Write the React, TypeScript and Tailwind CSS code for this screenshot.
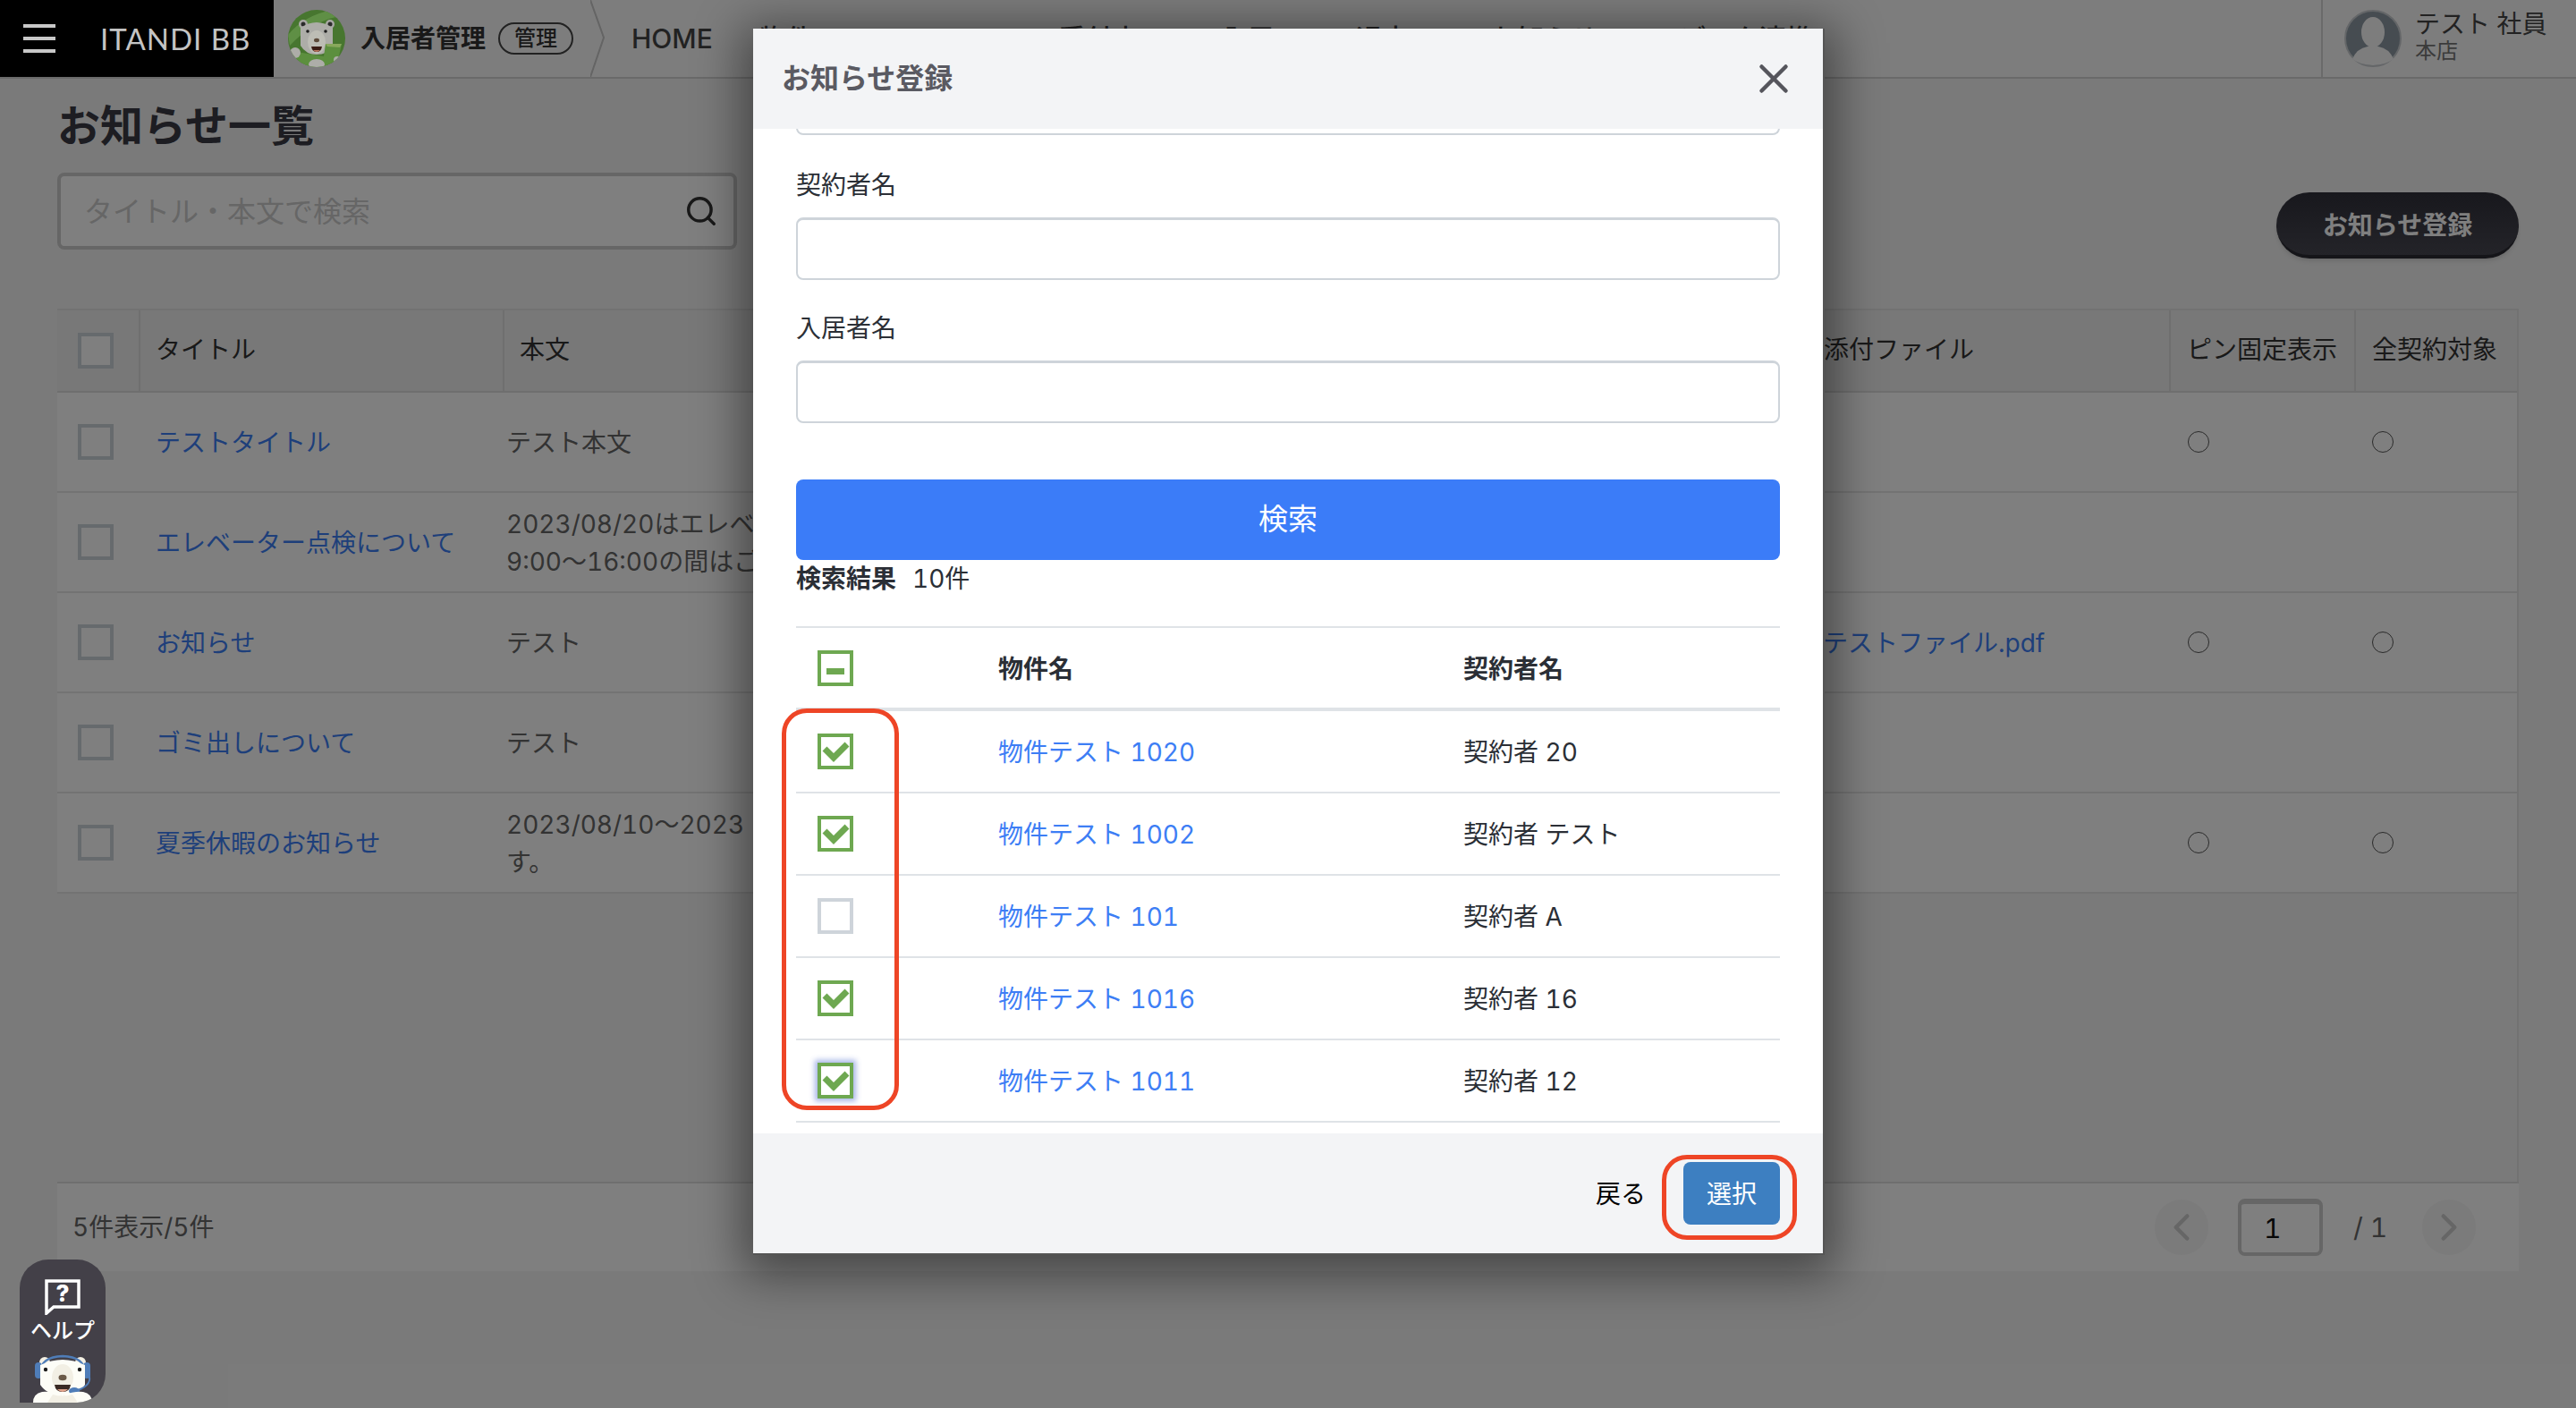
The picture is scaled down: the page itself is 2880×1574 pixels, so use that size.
import React from 'react';
import { Search, X, ChevronLeft, ChevronRight } from 'lucide-react';

const navItems = ['物件', 'ROOM', '受付中', '入居', '退去', 'お知らせ'];

const notices = [
    { title: 'テストタイトル', body: ['テスト本文'], file: '', marks: true },
    { title: 'エレベーター点検について', body: ['2023/08/20はエレベ', '9:00〜16:00の間はご'], file: '', marks: false },
    { title: 'お知らせ', body: ['テスト'], file: 'テストファイル.pdf', marks: true },
    { title: 'ゴミ出しについて', body: ['テスト'], file: '', marks: false },
    { title: '夏季休暇のお知らせ', body: ['2023/08/10〜2023', 'す。'], file: '', marks: true },
];

const results = [
    { name: '物件テスト 1020', owner: '契約者 20', checked: true, focus: false },
    { name: '物件テスト 1002', owner: '契約者 テスト', checked: true, focus: false },
    { name: '物件テスト 101', owner: '契約者 A', checked: false, focus: false },
    { name: '物件テスト 1016', owner: '契約者 16', checked: true, focus: false },
    { name: '物件テスト 1011', owner: '契約者 12', checked: true, focus: true },
];

const tableCols = 'grid grid-cols-[93px_407px_1455px_408px_207px_182px]';

const PageCheckbox = () => <span className="block w-10 h-10 border-4 border-[#cdd4da] bg-white" />;

const Radio = () => <span className="block w-6 h-6 rounded-full border-[1.5px] border-[#555]" />;

const GreenCheckbox = ({ checked, focus }: { checked: boolean; focus: boolean }) => (
    <span className={`block w-10 h-10 border-4 ${checked ? 'border-[#6ea851]' : 'border-[#ced4da]'} ${focus ? 'shadow-[0_0_6px_3px_rgba(60,90,200,0.45)]' : ''}`}>
        {checked && (
            <svg viewBox="0 0 32 32" className="w-8 h-8 overflow-visible">
                <path d="M4 13 L14 23 L29 8" fill="none" stroke="#6ea851" strokeWidth="7" />
            </svg>
        )}
    </span>
);

const TopBear = () => (
    <svg viewBox="0 0 64 64" className="relative z-30 w-16 h-16 shrink-0">
        <defs>
            <clipPath id="top-bear-clip"><circle cx="32" cy="32" r="32" /></clipPath>
        </defs>
        <g clipPath="url(#top-bear-clip)">
            <rect width="64" height="64" fill="#47762f" />
            <path d="M0 28 Q18 6 50 0 L64 0 L64 6 Q30 10 2 40 Z" fill="#5f8f45" />
            <circle cx="17" cy="16" r="5" fill="#a8a8a3" />
            <circle cx="47" cy="16" r="5" fill="#a8a8a3" />
            <circle cx="17" cy="16" r="2.5" fill="#2a2a2a" />
            <circle cx="47" cy="16" r="2.5" fill="#2a2a2a" />
            <path d="M14 20 Q32 8 50 20 L50 40 Q44 50 32 50 Q20 50 14 40 Z" fill="#adada8" />
            <ellipse cx="32" cy="36" rx="10" ry="13" fill="#bdbdb5" />
            <circle cx="22" cy="24" r="1.8" fill="#1c1c1c" />
            <circle cx="42" cy="24" r="1.8" fill="#1c1c1c" />
            <ellipse cx="32" cy="34" rx="3" ry="2.2" fill="#5c4a3a" />
            <path d="M26 41 H38 Q37 47 32 47 Q27 47 26 41 Z" fill="#3a1c14" />
            <path d="M28 45 H36 Q34 47 32 47 Q30 47 28 45 Z" fill="#b8735c" />
            <path d="M4 46 L40 52 L42 38 L60 38 L56 56 L32 70 L8 62 Z" fill="#5c8f3e" />
            <path d="M42 38 L60 38 L58 42 L44 41 Z" fill="#88a85c" />
            <circle cx="8" cy="48" r="6" fill="#adada8" />
            <ellipse cx="32" cy="61" rx="9" ry="6" fill="#adada8" />
            <circle cx="55" cy="56" r="4" fill="#adada8" />
        </g>
    </svg>
);

const HelpBear = () => (
    <svg viewBox="0 0 66 56" className="w-[66px] h-14">
        <circle cx="13" cy="11" r="6" fill="#f4f0e4" />
        <circle cx="53" cy="11" r="6" fill="#f4f0e4" />
        <path d="M9 22 Q8 5 33 4 Q58 5 57 22" fill="none" stroke="#4f7db8" strokeWidth="2.5" />
        <rect x="2" y="11" width="8" height="18" rx="4" fill="#4f7db8" />
        <rect x="56" y="11" width="8" height="18" rx="4" fill="#4f7db8" />
        <path d="M8 14 Q33 2 58 14 L58 36 Q50 48 33 48 Q16 48 8 36 Z" fill="#fdfdf7" />
        <ellipse cx="33" cy="28" rx="12" ry="15" fill="#f2efe4" />
        <circle cx="14" cy="19" r="2.2" fill="#1c1c1c" />
        <circle cx="52" cy="19" r="2.2" fill="#1c1c1c" />
        <ellipse cx="33" cy="28" rx="4.5" ry="3.2" fill="#6b5a48" />
        <path d="M24 36 H42 Q41 44 33 44 Q25 44 24 36 Z" fill="#3a2a24" />
        <path d="M27 41 H39 Q36 44 33 44 Q30 44 27 41 Z" fill="#e2a48c" />
        <path d="M62 24 Q67 36 50 42" fill="none" stroke="#4f7db8" strokeWidth="2" />
        <ellipse cx="46" cy="43" rx="6" ry="4" fill="#4f7db8" />
        <path d="M0 56 Q0 46 10 44 Q20 43 33 48 Q46 43 56 44 Q66 46 66 56 Z" fill="#fdfdf7" />
        <path d="M16 56 L22 47 Q33 50 44 47 L50 56 Z" fill="#f2efe4" />
    </svg>
);

const Page = () => (
    <div className="flex flex-col h-[1574px] bg-[#f5f5f5]">
        <header className="flex h-[88px] shrink-0 bg-[#fbfbfb] border-b-2 border-[#d4d4d4]">
            <div className="relative z-30 flex items-center w-[306px] bg-black pl-[26px]">
                <div className="flex flex-col gap-[10px] w-9">
                    <span className="block h-1 bg-[#c8c8c8]" />
                    <span className="block h-1 bg-[#c8c8c8]" />
                    <span className="block h-1 bg-[#c8c8c8]" />
                </div>
                <span className="ml-[50px] text-[33px] leading-none tracking-[1px] text-[#c4c4c4] font-['Lato',sans-serif]">ITANDI BB</span>
            </div>
            <div className="flex items-center w-[354px] pl-4">
                <TopBear />
                <span className="ml-[17px] text-[28px] font-bold text-[#333]">入居者管理</span>
                <span className="ml-[14px] flex items-center justify-center w-[84px] h-9 rounded-full border-2 border-[#444] text-[24px] leading-none font-medium text-[#333]">管理</span>
            </div>
            <svg viewBox="0 0 16 86" className="w-4 h-[86px] shrink-0">
                <path d="M0 0 L15 42 L0 86" fill="none" stroke="#c8c8c8" strokeWidth="2" />
            </svg>
            <nav className="flex items-center ml-[30px] gap-[52px] text-[30px] font-medium text-[#444]">
                <span>HOME</span>
                {navItems.map((item) => (
                    <span key={item} className="flex items-center gap-7">
                        {item}
                        <span className="text-[22px]">▾</span>
                    </span>
                ))}
                <span>データ連携</span>
            </nav>
            <div className="ml-auto flex items-center w-[285px] pl-[24px] border-l-2 border-[#d4d4d4]">
                <svg viewBox="0 0 64 64" className="w-16 h-16 shrink-0">
                    <circle cx="32" cy="32" r="31" fill="#8d99a3" stroke="#c8ccd0" strokeWidth="2" />
                    <ellipse cx="32" cy="25" rx="13" ry="17" fill="#fbfbfb" />
                    <path d="M9 55 Q14 43 26 41 L38 41 Q50 43 55 55 Q45 62 32 62 Q19 62 9 55 Z" fill="#fbfbfb" />
                </svg>
                <div className="ml-[15px] pb-[6px] flex flex-col">
                    <span className="text-[28px] leading-[34px] text-[#444]">テスト 社員</span>
                    <span className="text-[24px] leading-[26px] text-[#777]">本店</span>
                </div>
            </div>
        </header>

        <main className="flex flex-col px-[64px]">
            <h1 className="mt-[25px] text-[48px] leading-[56px] font-bold text-[#3a3a44]">お知らせ一覧</h1>
            <div className="flex items-end justify-between mt-[24px]">
                <div className="flex items-center justify-between w-[760px] h-[86px] pl-[26px] pr-[17px] rounded-lg border-4 border-[#ccc] bg-white">
                    <span className="pt-[2px] text-[32px] text-[#ccc]">タイトル・本文で検索</span>
                    <Search size={38} strokeWidth={2.2} className="text-[#333]" />
                </div>
                <button className="mb-[-10px] pt-1 w-[271px] h-[74px] rounded-full border-b-4 border-[#2a2a32] bg-gradient-to-b from-[#30303a] to-[#484852] text-white text-[28px] font-bold shadow-md">
                    お知らせ登録
                </button>
            </div>

            <div className="flex flex-col mt-[66px] h-[976px] w-[2752px] border-t-2 border-r-2 border-[#e4e4e4]">
                <div className={`${tableCols} h-[92px] shrink-0 bg-[#f0f0f0] border-b-2 border-[#dedede] text-[28px] text-[#333]`}>
                    <div className="flex items-center pl-[23px] border-r-2 border-[#dedede]"><PageCheckbox /></div>
                    <div className="flex items-center pl-[17px] pb-[2px] border-r-2 border-[#dedede]">タイトル</div>
                    <div className="flex items-center pl-[17px] pb-[2px]">本文</div>
                    <div className="flex items-center pl-[20px] pb-[2px] border-r-2 border-[#dedede]">添付ファイル</div>
                    <div className="flex items-center pl-[18px] pb-[2px] border-r-2 border-[#dedede]">ピン固定表示</div>
                    <div className="flex items-center pl-[18px] pb-[2px]">全契約対象</div>
                </div>
                {notices.map((n) => (
                    <div key={n.title} className={`${tableCols} h-[112px] shrink-0 bg-white border-b-2 border-[#e6e6e6] text-[28px]`}>
                        <div className="flex items-center pl-[23px]"><PageCheckbox /></div>
                        <div className="flex items-center pl-[17px] pt-[2px] text-[#3d7ef5]">{n.title}</div>
                        <div className="flex flex-col justify-center pl-[2px] pt-[2px] text-[#666] leading-[42px]">
                            {n.body.map((line) => <span key={line} className="whitespace-nowrap">{line}</span>)}
                        </div>
                        <div className="flex items-center pl-[19px] pt-[2px] text-[#3d7ef5]">{n.file}</div>
                        <div className="flex items-center pl-[19px]">{n.marks && <Radio />}</div>
                        <div className="flex items-center pl-[18px]">{n.marks && <Radio />}</div>
                    </div>
                ))}
                <div className="flex-1" />
            </div>

            <div className="flex items-center w-[2752px] h-[100px] pl-[17px] pr-[48px] bg-white border-t-2 border-[#dedede] text-[28px] text-[#666]">
                <span>5件表示/5件</span>
                <div className="ml-auto flex items-center">
                    <span className="flex items-center justify-center w-[60px] h-[62px] rounded-full bg-[#f7f7f7] text-[#ccc]"><ChevronLeft size={50} strokeWidth={2.2} /></span>
                    <span className="ml-[33px] flex items-center justify-start w-[95px] h-[64px] pl-[25px] rounded-lg border-4 border-t-[6px] border-[#ccc] text-[30px] text-[#111]">1</span>
                    <span className="ml-[34px] w-[38px] text-[30px] whitespace-nowrap">/ 1</span>
                    <span className="ml-[39px] flex items-center justify-center w-[60px] h-[62px] rounded-full bg-[#f7f7f7] text-[#ccc]"><ChevronRight size={50} strokeWidth={2.2} /></span>
                </div>
            </div>
        </main>
    </div>
);

const Modal = () => (
    <div className="absolute z-40 left-[842px] top-[32px] flex flex-col w-[1198px] h-[1371px] bg-white border-r-2 border-b-2 border-[#555] shadow-[0_10px_50px_12px_rgba(0,0,0,0.45)] text-[#2b2f36]">
        <div className="relative z-10 flex items-center justify-between h-[112px] shrink-0 pl-8 pr-[28px] bg-[#f3f4f6]">
            <span className="text-[32px] font-bold text-[#5a5a62]">お知らせ登録</span>
            <X size={54} strokeWidth={2} className="text-[#55555c]" />
        </div>

        <div className="flex flex-col flex-1 overflow-hidden px-12">
            <div className="h-[8px] shrink-0 -mt-px rounded-b-lg border-2 border-t-0 border-[#ced4da]" />
            <label className="mt-[35px] text-[28px] leading-[42px]">契約者名</label>
            <div className="mt-[15px] h-[70px] shrink-0 rounded-lg border-2 border-t-[3px] border-[#ced4da]" />
            <label className="mt-[33px] text-[28px] leading-[42px]">入居者名</label>
            <div className="mt-[15px] h-[70px] shrink-0 rounded-lg border-2 border-t-[3px] border-[#ced4da]" />
            <button className="mt-[63px] h-[90px] shrink-0 rounded-lg bg-[#3b7cf8] text-white text-[33px]">検索</button>
            <div className="flex items-center h-[42px] text-[28px]">
                <span className="font-bold">検索結果</span>
                <span className="ml-[18px]">10件</span>
            </div>

            <div className="mt-[32px] border-t-2 border-[#dfe3e7]">
                <div className="grid grid-cols-[226px_520px_1fr] h-[93px] items-center border-b-4 border-[#dfe3e7] text-[28px] font-bold">
                    <span className="pl-6">
                        <span className="flex w-10 h-10 border-4 border-[#6ea851] items-center justify-center">
                            <span className="block mt-2 w-5 h-[7px] bg-[#6ea851]" />
                        </span>
                    </span>
                    <span className="pt-[2px]">物件名</span>
                    <span className="pt-[2px]">契約者名</span>
                </div>
                {results.map((r) => (
                    <div key={r.name} className="grid grid-cols-[226px_520px_1fr] h-[92px] items-center border-b-2 border-[#dfe3e7] text-[28px]">
                        <span className="pl-6"><GreenCheckbox checked={r.checked} focus={r.focus} /></span>
                        <span className="pt-[2px] text-[#3d7ef5]">{r.name}</span>
                        <span className="pt-[2px]">{r.owner}</span>
                    </div>
                ))}
            </div>
        </div>

        <div className="flex items-center justify-end h-[134px] shrink-0 pr-12 bg-[#f3f4f6]">
            <span className="pt-[2px] text-[28px] text-black">戻る</span>
            <button className="ml-[42px] pt-[2px] w-[108px] h-[70px] rounded-lg bg-[#3d7fc1] text-white text-[28px]">選択</button>
        </div>
    </div>
);

export default function App() {
    return (
        <div className="relative w-[2880px] h-[1574px] overflow-hidden tabular-nums font-['Inter','Noto_Sans_CJK_JP','Noto_Sans',sans-serif]">
            <Page />
            {/* dim layer */}
            <div className="absolute inset-0 z-20 bg-black/50" />
            <Modal />

            {/* help widget */}
            <div className="absolute z-30 left-[22px] top-[1408px] flex flex-col items-center w-[96px] h-[160px] pt-[22px] rounded-t-[32px] rounded-br-[32px] bg-[#434048] overflow-hidden">
                <svg viewBox="0 0 40 40" className="w-10 h-10 shrink-0">
                    <path d="M2 2 H38 V31 H10 L2 38 Z" fill="none" stroke="#fff" strokeWidth="3.5" />
                    <text x="20" y="25" textAnchor="middle" fontSize="26" fontWeight="800" fill="#fff">?</text>
                </svg>
                <span className="mt-[3px] text-[24px] leading-[30px] font-medium text-white">ヘルプ</span>
                <div className="mt-auto"><HelpBear /></div>
            </div>

            {/* red annotations */}
            <div className="absolute z-50 left-[874px] top-[792px] w-[131px] h-[449px] rounded-[28px] border-[5px] border-[#ee4526]" />
            <div className="absolute z-50 left-[1858px] top-[1291px] w-[151px] h-[95px] rounded-[28px] border-[5px] border-[#ee4526]" />
        </div>
    );
}
